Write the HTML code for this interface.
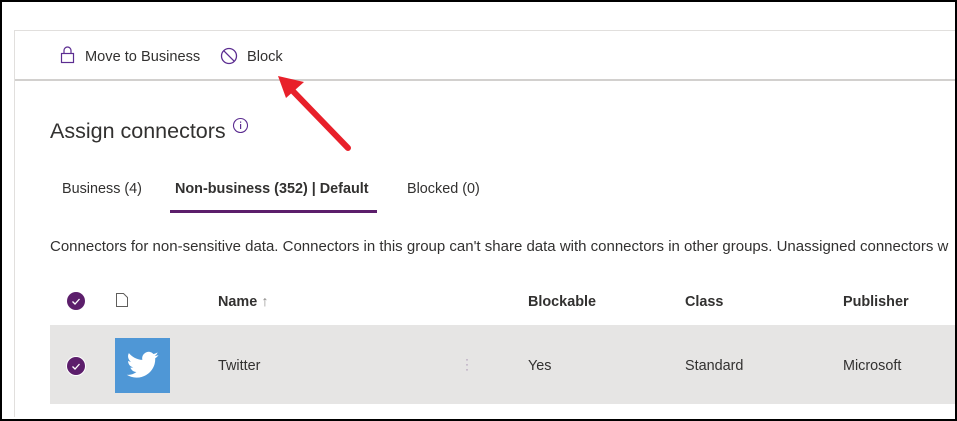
<!DOCTYPE html>
<html><head><style>
body{margin:0;width:957px;height:421px;background:#fff;position:relative;overflow:hidden;font-family:"Liberation Sans",sans-serif;color:#323130}
.a{position:absolute;white-space:nowrap}
</style></head><body>
<div class="a" style="left:0;top:0;width:953px;height:417px;border:2px solid #000"></div>
<div class="a" style="left:14px;top:30px;width:941px;height:1px;background:#e1dfdd"></div>
<div class="a" style="left:14px;top:30px;width:1px;height:387px;background:#e1dfdd"></div>
<div class="a" style="left:15px;top:79px;width:940px;height:2px;background:#d2d0ce"></div>
<svg class="a" style="left:60px;top:46px" width="16" height="18"><rect x="1.5" y="7.5" width="12" height="9" fill="none" stroke="#5c2d91" stroke-width="1.2"/><path d="M4 7.5V4.5a3.5 3.5 0 0 1 7 0v3" fill="none" stroke="#5c2d91" stroke-width="1.2"/></svg>
<div class="a" style="left:85px;top:49px;font-size:14.6px">Move to Business</div>
<svg class="a" style="left:220px;top:47px" width="18" height="18"><circle cx="9" cy="9" r="7.5" fill="none" stroke="#5c2d91" stroke-width="1.3"/><path d="M3.7 3.7L14.3 14.3" stroke="#5c2d91" stroke-width="1.3"/></svg>
<div class="a" style="left:247px;top:49px;font-size:14.6px">Block</div>
<svg class="a" style="left:270px;top:68px" width="90" height="90"><path d="M78 80L18 18" stroke="#e8202a" stroke-width="6" stroke-linecap="round"/><path d="M8 8L34 14L16 30Z" fill="#e8202a"/></svg>
<div class="a" style="left:50px;top:119px;font-size:21.5px">Assign connectors</div>
<svg class="a" style="left:232px;top:117px" width="17" height="17"><circle cx="8.5" cy="8.5" r="7" fill="none" stroke="#5c2d91" stroke-width="1.1"/><rect x="8" y="7" width="1.2" height="5" fill="#5c2d91"/><rect x="8" y="4.5" width="1.2" height="1.3" fill="#5c2d91"/></svg>
<div class="a" style="left:62px;top:181px;font-size:14.4px">Business (4)</div>
<div class="a" style="left:175px;top:181px;font-size:14.4px;font-weight:bold">Non-business (352) | Default</div>
<div class="a" style="left:170px;top:210px;width:207px;height:3px;background:#5c1e6b"></div>
<div class="a" style="left:407px;top:181px;font-size:14.4px">Blocked (0)</div>
<div class="a" style="left:50px;top:238px;font-size:15px">Connectors for non-sensitive data. Connectors in this group can't share data with connectors in other groups. Unassigned connectors w</div>
<div class="a" style="left:67px;top:292px;width:18px;height:18px;border-radius:50%;background:#5c1e6b"></div>
<svg class="a" style="left:67px;top:292px" width="18" height="18"><path d="M5.5 9.5l2.5 2.5 4.5-5" fill="none" stroke="#fff" stroke-width="1.3"/></svg>
<svg class="a" style="left:115px;top:292px" width="14" height="16"><path d="M1.5 1.5h7l4 4v9h-11z" fill="none" stroke="#605e5c"/></svg>
<div class="a" style="left:218px;top:294px;font-size:14.4px;font-weight:bold">Name <span style="font-weight:normal;color:#8a8886">↑</span></div>
<div class="a" style="left:528px;top:294px;font-size:14.4px;font-weight:bold">Blockable</div>
<div class="a" style="left:685px;top:294px;font-size:14.4px;font-weight:bold">Class</div>
<div class="a" style="left:843px;top:294px;font-size:14.4px;font-weight:bold">Publisher</div>
<div class="a" style="left:50px;top:325px;width:905px;height:79px;background:#e6e5e4"></div>
<div class="a" style="left:67px;top:357px;width:18px;height:18px;border-radius:50%;background:#5c1e6b;box-shadow:0 0 0 1px #fff"></div>
<svg class="a" style="left:67px;top:357px" width="18" height="18"><path d="M5.5 9.5l2.5 2.5 4.5-5" fill="none" stroke="#fff" stroke-width="1.3"/></svg>
<div class="a" style="left:115px;top:338px;width:55px;height:55px;background:#4f97d6"></div>
<svg class="a" style="left:115px;top:338px" width="55" height="55" viewBox="0 0 24 24"><path transform="translate(4.5 4.5) scale(0.63)" fill="#fff" d="M23 4.6c-.8.4-1.7.6-2.6.7.9-.6 1.6-1.4 2-2.5-.9.5-1.9.9-2.9 1.1a4.5 4.5 0 0 0-7.7 4.1C8 7.8 4.7 6 2.5 3.3c-1.2 2-.6 4.6 1.4 6-.7 0-1.4-.2-2-.6 0 2.2 1.5 4.1 3.6 4.5-.7.2-1.4.2-2 .1.6 1.8 2.3 3.1 4.2 3.1A9 9 0 0 1 1 18.3 12.8 12.8 0 0 0 20.7 6.9c.9-.6 1.7-1.4 2.3-2.3z"/></svg>
<div class="a" style="left:218px;top:358px;font-size:14.4px">Twitter</div>
<div class="a" style="left:465px;top:357px;font-size:12px;color:#a58db0;line-height:5px">·<br>·<br>·</div>
<div class="a" style="left:528px;top:358px;font-size:14.4px">Yes</div>
<div class="a" style="left:685px;top:358px;font-size:14.4px">Standard</div>
<div class="a" style="left:843px;top:358px;font-size:14.4px">Microsoft</div>
</body></html>
